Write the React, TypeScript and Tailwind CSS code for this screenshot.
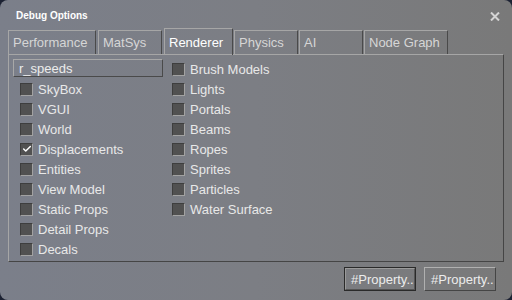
import { Check } from 'lucide-react';

const tabs = [
  { label: 'Performance', w: 'w-[88px]', ml: 'ml-0' },
  { label: 'MatSys', w: 'w-[64px]', ml: 'ml-[2px]' },
  { label: 'Renderer', w: 'w-[69px]', ml: 'ml-[2px]', active: true },
  { label: 'Physics', w: 'w-[64px]', ml: 'ml-[1px]' },
  { label: 'AI', w: 'w-[64px]', ml: 'ml-[1px]' },
  { label: 'Node Graph', w: 'w-[84px]', ml: 'ml-[1px]' },
];

const leftItems = [
  ['SkyBox', false],
  ['VGUI', false],
  ['World', false],
  ['Displacements', true],
  ['Entities', false],
  ['View Model', false],
  ['Static Props', false],
  ['Detail Props', false],
  ['Decals', false],
] as const;

const rightItems = [
  'Brush Models',
  'Lights',
  'Portals',
  'Beams',
  'Ropes',
  'Sprites',
  'Particles',
  'Water Surface',
];

function CheckRow({ label, checked = false }: { label: string; checked?: boolean }) {
  return (
    <div className="h-[20px] flex items-center">
      <div className="w-[13px] h-[13px] bg-[#515151] border border-t-[#3e3e3e] border-l-[#3e3e3e] border-b-[#a2a2a2] border-r-[#a2a2a2] flex items-center justify-center">
        {checked && <Check className="w-[10px] h-[10px] text-white" strokeWidth={3.5} />}
      </div>
      <span className="ml-[5px] text-[#e8e8e8]">{label}</span>
    </div>
  );
}

export default function App() {
  return (
    <div className="w-[512px] h-[300px] bg-[#1c2233] font-['Liberation_Sans',Arial,sans-serif] text-[13px] leading-none select-none">
      <div className="w-full h-full rounded-[8px] bg-gradient-to-r from-[#7b7f8a] via-[#7c7e84] to-[#797979] flex flex-col">
        {/* title bar */}
        <div className="h-[28px] flex items-start justify-between pl-[16px] pr-[12px] pt-[11px]">
          <span className="font-bold text-[10px] text-white">Debug Options</span>
          <svg width="10" height="9" viewBox="0 0 10 9" className="mt-[1px]">
            <path d="M1 0.5 L9 8.5 M9 0.5 L1 8.5" stroke="#d4d4d4" strokeWidth="2" />
          </svg>
        </div>

        {/* tabs */}
        <div className="flex items-end h-[26px] pl-[8px]">
          {tabs.map(t => (
            <div
              key={t.label}
              className={`${t.w} ${t.ml} ${t.active ? 'h-[27px] -mb-px z-10 text-white' : 'h-[24px] text-[#d6d6d6]'} border-t border-l border-r border-t-[#a6a6a6] border-l-[#a6a6a6] border-r-[#4a4a4a] pl-[4px] flex items-center`}
            >
              {t.label}
            </div>
          ))}
        </div>

        {/* panel */}
        <div className="ml-[8px] w-[496px] h-[208px] border border-t-[#a6a6a6] border-l-[#a6a6a6] border-b-[#454545] border-r-[#454545] pt-[4px] pl-[4px] flex">
          <div className="w-[150px] flex flex-col">
            <div className="h-[20px]">
              <div className="h-[18px] border border-t-[#a8a8a8] border-l-[#a8a8a8] border-b-[#4a4a4a] border-r-[#4a4a4a] pl-[5px] flex items-center text-[#ececec]">
                r_speeds
              </div>
            </div>
            <div className="pl-[7px]">
              {leftItems.map(([l, c]) => (
                <CheckRow key={l} label={l} checked={c} />
              ))}
            </div>
          </div>
          <div className="ml-[9px] flex flex-col">
            {rightItems.map(l => (
              <CheckRow key={l} label={l} />
            ))}
          </div>
        </div>

        {/* buttons */}
        <div className="flex justify-end gap-[8px] pr-[16px] mt-[5px]">
          <div className="w-[72px] h-[24px] border border-[#2a2a2a] flex">
            <div className="flex-1 border border-t-[#9a9a9a] border-l-[#9a9a9a] border-b-[#555] border-r-[#555] flex items-center pl-[5px] text-[#ececec]">
              #Property..
            </div>
          </div>
          <div className="w-[72px] h-[24px] border border-t-[#b0b0b0] border-l-[#b0b0b0] border-b-[#454545] border-r-[#454545] flex items-center pl-[6px] text-[#ececec]">
            #Property..
          </div>
        </div>
      </div>
    </div>
  );
}
